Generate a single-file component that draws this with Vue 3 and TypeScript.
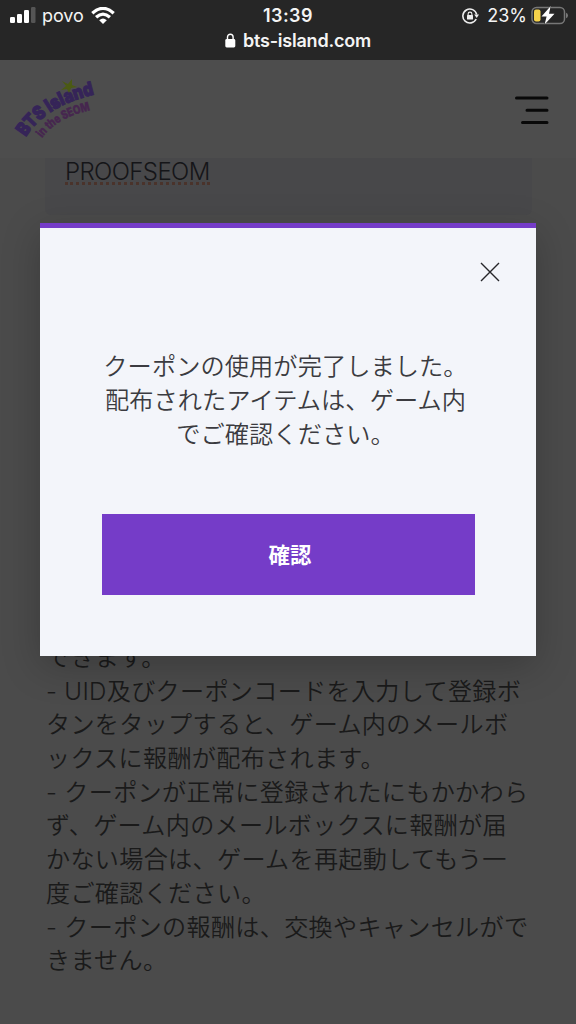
<script setup lang="ts">
const notices: string[] = [
  'できます。',
  '- UID及びクーポンコードを入力して登録ボ',
  'タンをタップすると、ゲーム内のメールボ',
  'ックスに報酬が配布されます。',
  '- クーポンが正常に登録されたにもかかわら',
  'ず、ゲーム内のメールボックスに報酬が届',
  'かない場合は、ゲームを再起動してもう一',
  '度ご確認ください。',
  '- クーポンの報酬は、交換やキャンセルがで',
  'きません。',
]

const message: string[] = [
  'クーポンの使用が完了しました。',
  '配布されたアイテムは、ゲーム内',
  'でご確認ください。',
]
</script>

<template>
  <div class="screen">
    <div class="status">
      <div class="row">
        <div class="side">
          <svg class="signal" width="26" height="17" viewBox="0 0 26 17">
            <rect x="0" y="10" width="5" height="6" rx="1.3" fill="#fff" />
            <rect x="7" y="7" width="5" height="9" rx="1.3" fill="#fff" />
            <rect x="14" y="3" width="5" height="13" rx="1.3" fill="#fff" />
            <rect x="21" y="0" width="4.500" height="16" rx="1.300" fill="#555" />
          </svg>
          <span class="carrier">povo</span>
          <svg class="wifi" width="24" height="18" viewBox="0 0 24 18">
            <g fill="none" stroke="#fff" stroke-width="3.300">
              <path d="M1.300 6.200 Q12 -3.400 22.700 6.200" />
              <path d="M5.100 10.200 Q12 4 18.900 10.200" />
            </g>
            <path d="M8.200 13.200 Q12 10 15.800 13.200 L12 17Z" fill="#fff" />
          </svg>
        </div>
        <div class="time">13:39</div>
        <div class="side right">
          <svg class="lock-rotate" width="18" height="16" viewBox="0 0 18 16">
            <path d="M14.200 11 A7 7 0 1 1 14.700 6.500" fill="none" stroke="#eee" stroke-width="1.600" />
            <path d="M12.200 6.500 H17 L14.700 10Z" fill="#eee" />
            <rect x="5" y="7" width="6" height="4.500" rx=".6" fill="#eee" />
            <path d="M6.100 7.400 V6 a1.900 1.900 0 0 1 3.800 0 V7.400" fill="none" stroke="#eee" stroke-width="1.100" />
          </svg>
          <span class="percent">23%</span>
          <svg class="battery" width="38" height="20" viewBox="0 0 38 20">
            <rect x="1" y="1.500" width="32.500" height="16" rx="4.500" fill="none" stroke="#777" stroke-width="1.500" />
            <path d="M35 6.700 Q37 7.500 37 9.500 T35 12.300Z" fill="#777" />
            <rect x="3" y="3.500" width="6.500" height="12" rx="2" fill="#f7d34a" />
            <path d="M19.700 0 L10.500 10.500 H15.600 L13.600 18.500 L23.500 7.800 H18Z" fill="#fff" stroke="#262626" stroke-width="1" paint-order="stroke" />
          </svg>
        </div>
      </div>
      <div class="address">
        <svg width="11" height="15" viewBox="0 0 11 15">
          <rect x="0.300" y="6" width="10" height="8.500" rx="1.400" fill="#fff" />
          <path d="M2.500 6.500 V4 a2.800 2.800 0 0 1 5.600 0 V6.500" fill="none" stroke="#fff" stroke-width="1.400" />
        </svg>
        <span>bts-island.com</span>
      </div>
    </div>

    <header class="header">
      <svg class="logo" width="90" height="70" viewBox="0 0 90 70">
        <defs>
          <path id="arc-top" d="M18 65 Q38 33 89 22" />
          <path id="arc-bottom" d="M34 66 Q50 44 88 37" />
        </defs>
        <text class="logo-big"><textPath href="#arc-top" textLength="83" lengthAdjust="spacingAndGlyphs">BTS Island</textPath></text>
        <text class="logo-small"><textPath href="#arc-bottom" textLength="57" lengthAdjust="spacingAndGlyphs">in the SEOM</textPath></text>
        <path d="M54 9 L60 12 L64 7 L64 13 L69 15 L63 16 L61 21 L59 17 L53 18 L58 14Z" fill="#4b5a14" />
      </svg>
      <svg class="menu" width="36" height="32" viewBox="0 0 36 32">
        <path d="M2.500 3 H33 M13 15.300 H33 M8.500 27.500 H33" stroke="#090909" stroke-width="3" stroke-linecap="round" />
      </svg>
    </header>

    <main class="page">
      <div class="field"><span class="code">PROOFSEOM</span></div>
      <div class="notices">
        <div v-for="line in notices" :key="line" class="line">{{ line }}</div>
      </div>
    </main>

    <section class="modal">
      <svg class="close" width="20" height="20" viewBox="0 0 20 20">
        <path d="M1 1 L19 19 M19 1 L1 19" stroke="#26262a" stroke-width="1.400" />
      </svg>
      <div class="message">
        <div v-for="line in message" :key="line">{{ line }}</div>
      </div>
      <button class="confirm">確認</button>
    </section>
  </div>
</template>

<style>
body {
  margin: 0;
  background: #4b4b4b;
}
</style>

<style scoped>
.screen {
  position: relative;
  width: 576px;
  height: 1024px;
  overflow: hidden;
  background: #4b4b4b;
  font-family: Inter, "Noto Sans CJK JP", sans-serif;
}
.status {
  height: 60px;
  background: #262626;
  color: #f4f4f4;
}
.row {
  display: grid;
  grid-template-columns: 1fr 80px 1fr;
  height: 31px;
  align-items: center;
}
.side {
  display: flex;
  align-items: center;
  height: 31px;
  padding-left: 10px;
}
.right {
  justify-content: flex-end;
  padding: 0 8px 0 0;
}
.carrier {
  margin-left: 6px;
  width: 41px;
  font-size: 18px;
  letter-spacing: -0.1px;
}
.wifi {
  margin-left: 8px;
}
.time {
  text-align: center;
  font-size: 18px;
  font-weight: 600;
  letter-spacing: 0.4px;
}
.lock-rotate {
  margin-right: 1px;
}
.percent {
  margin: 0 4px 0 6px;
  font-size: 18px;
}
.battery {
  margin-right: -1px;
}
.address {
  display: flex;
  align-items: center;
  gap: 7px;
  height: 18px;
  padding-left: 225px;
  font-size: 18px;
  font-weight: 600;
  letter-spacing: -0.22px;
}
.header {
  display: flex;
  justify-content: space-between;
  height: 98px;
  background: #4d4d4d;
}
.logo {
  margin: 12px 0 0 8px;
  overflow: visible;
}
.logo-big {
  font: 900 19px Inter, sans-serif;
  fill: #352458;
  stroke: #352458;
  stroke-width: 1px;
}
.logo-small {
  font: 800 12px Inter, sans-serif;
  fill: #46264f;
  stroke: #46264f;
  stroke-width: 0.5px;
}
.menu {
  margin: 35px 26px 0 0;
}
.field {
  box-sizing: border-box;
  width: 487px;
  height: 57px;
  margin-left: 45px;
  padding-left: 20px;
  border-radius: 0 0 6px 6px;
  background: #48484a;
}
.code {
  display: inline-block;
  height: 24px;
  border-bottom: 3px dotted #4a332b;
  color: #151518;
  font-size: 24px;
  font-weight: 350;
  line-height: 27px;
  letter-spacing: -0.6px;
}
.notices {
  margin: 426px 0 0 46px;
  color: #1a1a1a;
  font-size: 24.1px;
  font-weight: 350;
  letter-spacing: 0.33px;
}
.line {
  height: 33.7px;
  line-height: 34.7px;
  white-space: pre;
}
.modal {
  position: absolute;
  left: 40px;
  top: 223px;
  box-sizing: border-box;
  width: 496px;
  height: 433px;
  border-top: 5px solid #753cc8;
  background: #f3f5fa;
  box-shadow: 0 10px 36px rgba(0, 0, 0, 0.22);
  display: flex;
  flex-direction: column;
  align-items: center;
}
.close {
  align-self: flex-end;
  flex: none;
  margin: 34px 36px 0 0;
}
.message {
  margin: 68px 5px 0 0;
  width: 373px;
  text-align: center;
  color: #3b3b40;
  font-size: 24.2px;
  font-weight: 350;
  letter-spacing: 0.1px;
  line-height: 34px;
  white-space: nowrap;
}
.confirm {
  margin: 62px 0 0 0;
  flex: none;
  width: 373px;
  height: 81px;
  padding: 0 0 2px 4px;
  border: 0;
  background: #753cc8;
  color: #fff;
  font: 700 21.4px "Noto Sans CJK JP", sans-serif;
}
</style>
